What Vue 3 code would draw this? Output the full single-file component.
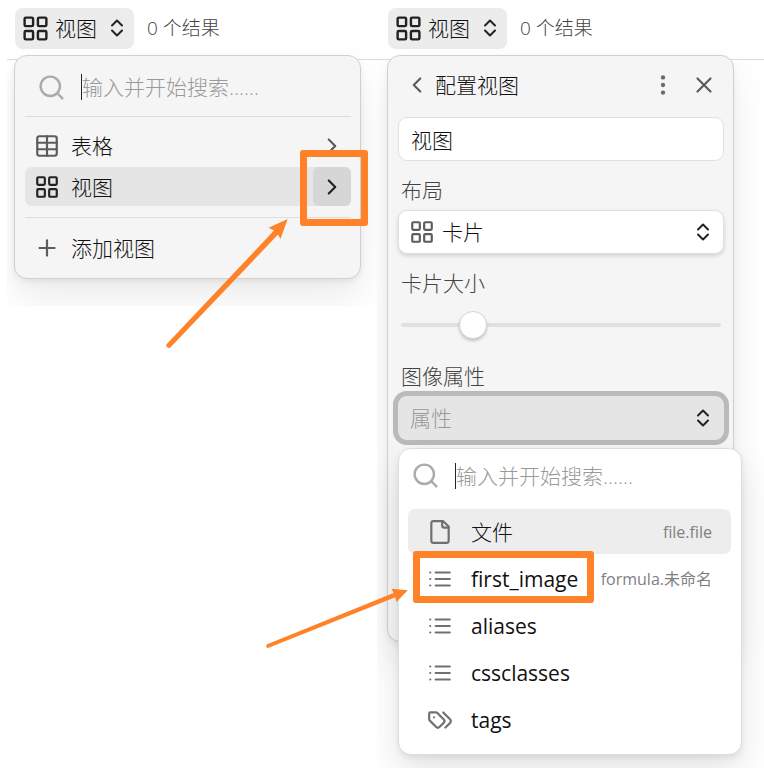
<script setup>
import { ref } from 'vue'

const icons = {
  grid: ['M4 3h5a1 1 0 0 1 1 1v5a1 1 0 0 1-1 1H4a1 1 0 0 1-1-1V4a1 1 0 0 1 1-1z', 'M15 3h5a1 1 0 0 1 1 1v5a1 1 0 0 1-1 1h-5a1 1 0 0 1-1-1V4a1 1 0 0 1 1-1z', 'M15 14h5a1 1 0 0 1 1 1v5a1 1 0 0 1-1 1h-5a1 1 0 0 1-1-1v-5a1 1 0 0 1 1-1z', 'M4 14h5a1 1 0 0 1 1 1v5a1 1 0 0 1-1 1H4a1 1 0 0 1-1-1v-5a1 1 0 0 1 1-1z'],
  table: ['M5 3h14a2 2 0 0 1 2 2v14a2 2 0 0 1-2 2H5a2 2 0 0 1-2-2V5a2 2 0 0 1 2-2z', 'M12 3v18', 'M3 9h18', 'M3 15h18'],
  file: ['M15 2H6a2 2 0 0 0-2 2v16a2 2 0 0 0 2 2h12a2 2 0 0 0 2-2V7z', 'M14 2v4a2 2 0 0 0 2 2h4'],
  list: ['M8 6h13', 'M8 12h13', 'M8 18h13', 'M3 6h.01', 'M3 12h.01', 'M3 18h.01'],
  tags: ['m15 5 6.3 6.3a2.4 2.4 0 0 1 0 3.4L17 19', 'M9.586 5.586A2 2 0 0 0 8.172 5H3a1 1 0 0 0-1 1v5.172a2 2 0 0 0 .586 1.414L8.29 18.29a2.426 2.426 0 0 0 3.42 0l3.58-3.58a2.426 2.426 0 0 0 0-3.42z', 'M6.5 9.5h.01'],
  sort: ['m7 14.5 5 5 5-5', 'm7 9.5 5-5 5 5'],
  search: ['M19 11a8 8 0 1 1-16 0 8 8 0 0 1 16 0z', 'm21 21-4.3-4.3'],
  right: ['m9 18 6-6-6-6'],
  left: ['m15 18-6-6 6-6'],
  plus: ['M5 12h14', 'M12 5v14'],
  close: ['M18 6 6 18', 'm6 6 12 12']
}

const views = [
  { name: '表格', icon: 'table', active: false },
  { name: '视图', icon: 'grid', active: true }
]
const properties = [
  { name: '文件', icon: 'file', source: 'file.file', active: true },
  { name: 'first_image', icon: 'list', source: 'formula.未命名', marked: true },
  { name: 'aliases', icon: 'list' },
  { name: 'cssclasses', icon: 'list' },
  { name: 'tags', icon: 'tags' }
]
const viewName = ref('视图')
const layout = ref('cards')
const cardSize = ref(20)
</script>

<template>
  <main class="page">
    <section class="pane pane-list">
      <header class="toolbar">
        <button class="view-button" type="button">
          <svg class="icon icon-large" viewBox="0 0 24 24"><path v-for="d in icons.grid" :key="d" :d="d" /></svg>
          <span>视图</span>
          <svg class="icon icon-sort" viewBox="0 0 24 24"><path v-for="d in icons.sort" :key="d" :d="d" /></svg>
        </button>
        <span class="count">0 个结果</span>
      </header>
      <div class="panel view-panel">
        <label class="search">
          <svg class="icon icon-search" viewBox="0 0 24 24"><path v-for="d in icons.search" :key="d" :d="d" /></svg>
          <input type="text" placeholder="输入并开始搜索......" aria-label="搜索">
        </label>
        <ul class="views">
          <li v-for="v in views" :key="v.name" class="view-row" :class="{ active: v.active }">
            <button class="row-main" type="button">
              <svg class="icon" viewBox="0 0 24 24"><path v-for="d in icons[v.icon]" :key="d" :d="d" /></svg>
              <span>{{ v.name }}</span>
            </button>
            <button class="row-next" type="button" aria-label="配置视图">
              <svg class="icon" viewBox="0 0 24 24"><path v-for="d in icons.right" :key="d" :d="d" /></svg>
            </button>
            <span v-if="v.active" class="mark mark-next"></span>
          </li>
        </ul>
        <div class="add">
          <button class="row-main" type="button">
            <svg class="icon" viewBox="0 0 24 24"><path v-for="d in icons.plus" :key="d" :d="d" /></svg>
            <span>添加视图</span>
          </button>
        </div>
      </div>
    </section>

    <section class="pane pane-config">
      <header class="toolbar">
        <button class="view-button" type="button">
          <svg class="icon icon-large" viewBox="0 0 24 24"><path v-for="d in icons.grid" :key="d" :d="d" /></svg>
          <span>视图</span>
          <svg class="icon icon-sort" viewBox="0 0 24 24"><path v-for="d in icons.sort" :key="d" :d="d" /></svg>
        </button>
        <span class="count">0 个结果</span>
      </header>
      <div class="panel config-panel">
        <div class="config-head">
          <button class="head-button" type="button" aria-label="返回">
            <svg class="icon" viewBox="0 0 24 24"><path v-for="d in icons.left" :key="d" :d="d" /></svg>
          </button>
          <h2>配置视图</h2>
          <button class="head-button" type="button" aria-label="更多">
            <svg class="icon dots" viewBox="0 0 24 24"><circle cx="12" cy="5" r="2" /><circle cx="12" cy="12" r="2" /><circle cx="12" cy="19" r="2" /></svg>
          </button>
          <button class="head-button" type="button" aria-label="关闭">
            <svg class="icon" viewBox="0 0 24 24"><path v-for="d in icons.close" :key="d" :d="d" /></svg>
          </button>
        </div>
        <input v-model="viewName" class="name-input" type="text" aria-label="名称">

        <label class="field-label" for="layout">布局</label>
        <div class="select-box">
          <svg class="icon" viewBox="0 0 24 24"><path v-for="d in icons.grid" :key="d" :d="d" /></svg>
          <select id="layout" v-model="layout">
            <option value="cards">卡片</option>
            <option value="table">表格</option>
          </select>
          <svg class="icon icon-sort" viewBox="0 0 24 24"><path v-for="d in icons.sort" :key="d" :d="d" /></svg>
        </div>

        <label class="field-label" for="size">卡片大小</label>
        <input id="size" v-model="cardSize" class="slider" type="range" min="0" max="100">

        <label class="field-label" for="image">图像属性</label>
        <div class="combo">
          <button id="image" class="combo-button" type="button">
            <span>属性</span>
            <svg class="icon icon-sort" viewBox="0 0 24 24"><path v-for="d in icons.sort" :key="d" :d="d" /></svg>
          </button>
          <div class="menu">
            <label class="search">
              <svg class="icon icon-search" viewBox="0 0 24 24"><path v-for="d in icons.search" :key="d" :d="d" /></svg>
              <input type="text" placeholder="输入并开始搜索......" aria-label="搜索属性">
            </label>
            <ul class="options">
              <li v-for="p in properties" :key="p.name">
                <button class="option" :class="{ active: p.active }" type="button">
                  <svg class="icon" viewBox="0 0 24 24"><path v-for="d in icons[p.icon]" :key="d" :d="d" /></svg>
                  <span class="option-name">{{ p.name }}</span>
                  <span v-if="p.source" class="source">{{ p.source }}</span>
                </button>
                <span v-if="p.marked" class="mark mark-option"></span>
              </li>
            </ul>
          </div>
        </div>
      </div>
    </section>

    <svg class="arrows" width="420" height="660" viewBox="0 0 420 660" aria-hidden="true">
      <path d="M287.7 219 268.6 227.8 274 230.6 167 343.8a2.4 2.4 0 0 0 3.8 3.2L278 234.6 280.4 239z" />
      <path d="M407.8 590.3 391.5 588.8 393.6 593 267.2 644.3a1.9 1.9 0 0 0 1.4 3.5L395.3 597.2 396.4 602z" />
    </svg>
  </main>
</template>

<style>
body {
  margin: 0;
  background: #fff;
}
</style>

<style scoped>
.page {
  position: relative;
  display: flex;
  align-items: flex-start;
  box-sizing: border-box;
  min-height: 100vh;
  padding-left: 7px;
  font-family: "Open Sans", "Noto Sans CJK SC", sans-serif;
  font-size: 21px;
  font-weight: 300;
  line-height: 30px;
  color: #111;
}
button, input, select {
  box-sizing: border-box;
  margin: 0;
  padding: 0;
  border: 0;
  background: none;
  font: inherit;
  color: inherit;
  text-align: left;
  outline: none;
}
ul {
  margin: 0;
  padding: 0;
  list-style: none;
}
.icon {
  flex: none;
  width: 26px;
  height: 26px;
  fill: none;
  stroke: #5c5c5c;
  stroke-width: 2;
  stroke-linecap: round;
  stroke-linejoin: round;
}
.icon-large {
  width: 29px;
  height: 29px;
  stroke: #222;
}
.icon-sort {
  width: 24px;
  height: 24px;
  stroke: #222;
}
.icon-search {
  width: 29px;
  height: 29px;
  stroke: #ababab;
}
.pane {
  box-sizing: border-box;
  min-width: 0;
  overflow: hidden;
}
.pane-list {
  flex: 370;
  padding-bottom: 27px;
}
.pane-config {
  flex: 387;
  min-height: 100vh;
}
.toolbar {
  display: flex;
  align-items: center;
  gap: 13px;
  box-sizing: border-box;
  height: 60px;
  padding: 0 8px 3px;
  border-bottom: 1px solid #dcdcdc;
}
.pane-config .toolbar {
  padding-left: 11px;
}
.view-button {
  display: flex;
  align-items: center;
  height: 41px;
  padding: 0 5px 0 6px;
  border-radius: 8px;
  background: #ececec;
}
.view-button span {
  margin: 0 8px 0 5px;
}
.count {
  font-size: 19px;
  color: #444;
}
.panel {
  position: relative;
  margin-top: -5px;
  border: 1px solid #d0d0d0;
  border-radius: 13px;
  background: #f5f5f5;
  box-shadow: 0 2px 4px rgba(0, 0, 0, .03), 0 4px 9px rgba(0, 0, 0, .04), 0 19px 38px rgba(0, 0, 0, .08);
}
.view-panel {
  margin-left: 7px;
  margin-right: 16px;
  padding: 0 9px 11px 10px;
}
.search {
  display: flex;
  align-items: center;
  gap: 15px;
  box-sizing: border-box;
  height: 60px;
  padding: 2px 0 0 12px;
}
.search input {
  flex: 1;
  min-width: 0;
  height: 26px;
  border-left: 1px solid #222;
  line-height: 26px;
}
.search input::placeholder {
  color: #999;
  opacity: 1;
}
.views {
  display: grid;
  gap: 2px;
  padding: 9px 0 11px;
  border-top: 1px solid #dedede;
  border-bottom: 1px solid #dedede;
}
.view-row {
  position: relative;
  display: flex;
  height: 39px;
  border-radius: 7px;
}
.view-row.active {
  background: #e5e5e5;
}
.view-row.active .icon {
  stroke: #222;
}
.row-main {
  display: flex;
  flex: 1;
  align-items: center;
  gap: 11px;
  height: 39px;
  padding-left: 9px;
}
.row-next {
  display: flex;
  align-items: center;
  justify-content: center;
  width: 38px;
  border-radius: 6px;
}
.active .row-next {
  background: #d6d6d6;
}
.add {
  display: flex;
  padding-top: 10px;
}
.mark {
  position: absolute;
  z-index: 2;
  border: 7px solid #ff8128;
  border-radius: 3px;
  pointer-events: none;
}
.mark-next {
  inset: -17px -17px -20px auto;
  width: 54px;
}
.config-panel {
  margin-left: 10px;
  margin-right: 30px;
  padding: 0 9px 201px 10px;
}
.config-head {
  display: flex;
  align-items: center;
  height: 57px;
  padding-bottom: 4px;
}
.config-head h2 {
  flex: 1;
  margin: 0;
  font-size: 21px;
  font-weight: inherit;
}
.head-button {
  display: flex;
  align-items: center;
  justify-content: center;
  width: 41px;
  height: 41px;
}
.head-button:first-child {
  width: 37px;
}
.dots {
  fill: #6a6a6a;
  stroke: none;
}
.name-input {
  display: block;
  width: 100%;
  height: 44px;
  padding: 0 12px;
  border: 1px solid #e0e0e0;
  border-radius: 9px;
  background: #fff;
}
.field-label {
  display: block;
  padding: 14px 3px 5px;
  color: #444;
}
.select-box {
  position: relative;
  display: flex;
  align-items: center;
  height: 44px;
}
.select-box select {
  width: 100%;
  height: 44px;
  padding-left: 43px;
  appearance: none;
  border: 1px solid #e0e0e0;
  border-radius: 9px;
  background: #fff;
  box-shadow: 0 2px 4px rgba(0, 0, 0, .14);
}
.select-box .icon {
  position: absolute;
  left: 11px;
  pointer-events: none;
}
.select-box .icon-sort {
  left: auto;
  right: 9px;
}
.slider {
  display: block;
  width: calc(100% - 6px);
  height: 28px;
  margin: 8px 3px;
  appearance: none;
}
.slider::-webkit-slider-runnable-track {
  height: 4px;
  border-radius: 2px;
  background: #e0e0e0;
}
.slider::-webkit-slider-thumb {
  width: 28px;
  height: 28px;
  margin-top: -12px;
  appearance: none;
  border: 1px solid #d6d6d6;
  border-radius: 50%;
  background: #fff;
  box-shadow: 0 2px 3px rgba(0, 0, 0, .2);
}
.combo {
  position: relative;
}
.combo-button {
  display: flex;
  align-items: center;
  justify-content: space-between;
  width: 100%;
  height: 44px;
  padding: 0 9px 0 12px;
  border-radius: 9px;
  background: #e5e5e5;
  color: #999;
  box-shadow: 0 0 0 5px #bababa;
}
.menu {
  position: absolute;
  z-index: 1;
  top: 52px;
  left: 0;
  right: -18px;
  padding: 0 10px 12px 9px;
  border: 1px solid #dedede;
  border-radius: 13px;
  background: #fff;
  box-shadow: 0 2px 4px rgba(0, 0, 0, .03), 0 4px 9px rgba(0, 0, 0, .05), 0 19px 38px rgba(0, 0, 0, .1);
}
.menu .search {
  height: 60px;
  padding: 0 0 7px 3px;
}
.options {
  display: grid;
  gap: 2px;
}
.options li {
  position: relative;
}
.option {
  display: flex;
  align-items: center;
  width: 100%;
  height: 45px;
  padding: 0 19px;
  border-radius: 7px;
  font-weight: 400;
}
.option.active {
  background: #ededed;
}
.option.active .option-name {
  font-weight: 300;
}
.option .icon {
  stroke: #707070;
}
.option-name {
  flex: 1;
  margin-left: 18px;
}
.source {
  font-size: 16px;
  color: #808080;
}
.mark-option {
  inset: -5px auto -2px 5px;
  width: 167px;
}
.arrows {
  position: absolute;
  top: 0;
  left: 0;
  z-index: 3;
  fill: #ff8128;
  pointer-events: none;
}
</style>
